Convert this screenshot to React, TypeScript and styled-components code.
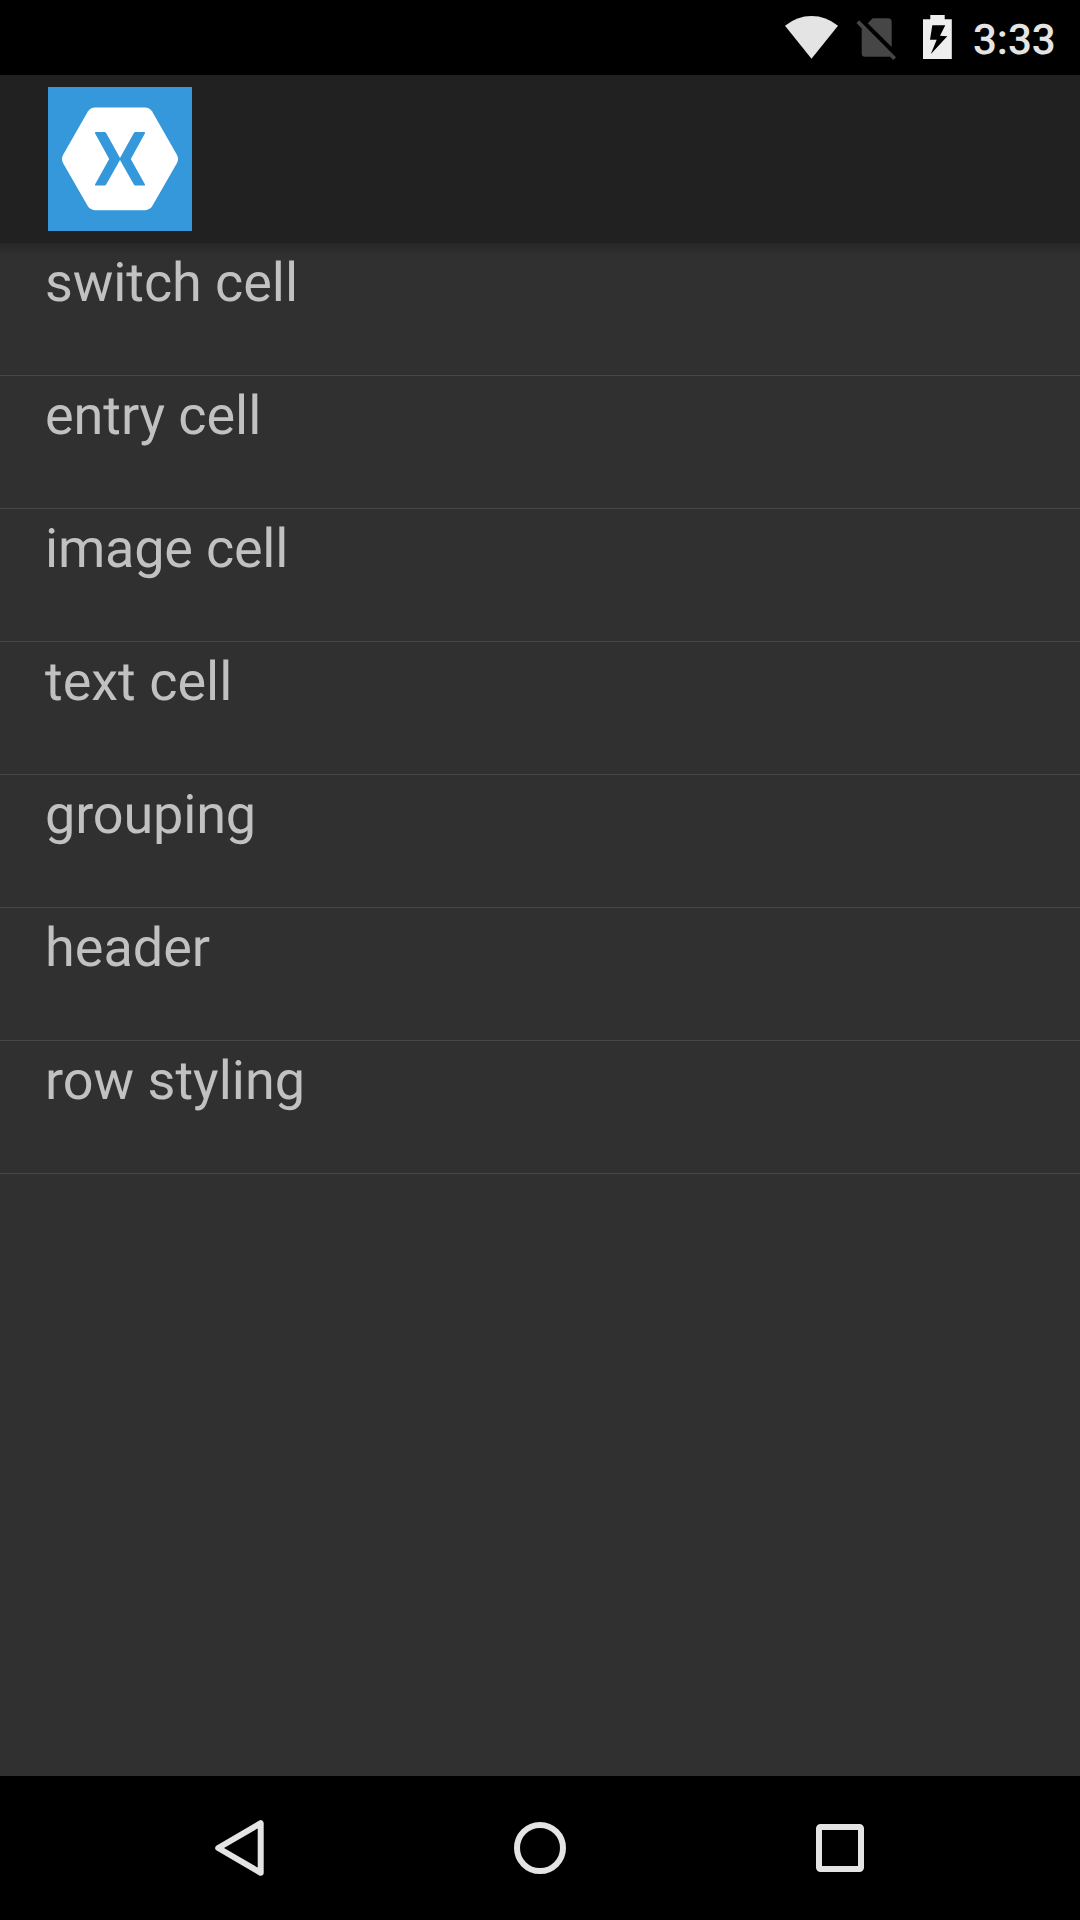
import React from 'react';
import styled, { createGlobalStyle } from 'styled-components';

const GlobalStyle = createGlobalStyle`
  html, body { margin: 0; background: #303030; }
  * { box-sizing: border-box; }
`;

const Screen = styled.div`
  width: 1080px;
  height: 1920px;
  display: flex;
  flex-direction: column;
  overflow: hidden;
  background: #303030;
  font-family: Roboto, sans-serif;
  text-rendering: geometricPrecision;
`;

const StatusBar = styled.header`
  height: 75px;
  flex: none;
  display: flex;
  justify-content: flex-end;
  padding-right: 24px;
  background: #000;
`;

const StatusIcon = styled.svg<{ $width: number; $gap: number }>`
  width: ${(p) => p.$width}px;
  height: 75px;
  margin-right: ${(p) => p.$gap}px;
  flex: none;
`;

const Clock = styled.time`
  width: 83px;
  height: 75px;
  font-size: 42px;
  font-weight: 500;
  line-height: 82px;
  color: #e4e4e4;
`;

const ActionBar = styled.div`
  height: 168px;
  flex: none;
  padding: 12px 48px;
  background: #212121;
`;

const Logo = styled.svg`
  display: block;
  width: 144px;
  height: 144px;
`;

const List = styled.ul`
  flex: 1;
  margin: 0;
  padding: 0;
  list-style: none;
  background: linear-gradient(#272727, #303030 12px);
`;

const Row = styled.li<{ $tracking: number }>`
  height: 133px;
  padding: 9px 45px 0;
  border-bottom: 1px solid #474747;
  font-size: 54px;
  line-height: 64px;
  letter-spacing: ${(p) => p.$tracking}px;
  color: #c1c1c1;
`;

const NavBar = styled.nav`
  height: 144px;
  flex: none;
  display: flex;
  align-items: center;
  justify-content: center;
  gap: 204px;
  background: #000;
`;

const NavButton = styled.button`
  width: 96px;
  height: 144px;
  padding: 0;
  border: 0;
  background: none;
`;

const NavIcon = styled.svg`
  display: block;
  width: 96px;
  height: 144px;
  fill: none;
  stroke: #e4e4e4;
  stroke-width: 6;
  stroke-linejoin: round;
`;

const items = [
  { label: 'switch cell', tracking: -0.08 },
  { label: 'entry cell', tracking: -0.08 },
  { label: 'image cell', tracking: -0.22 },
  { label: 'text cell', tracking: 0 },
  { label: 'grouping', tracking: -0.16 },
  { label: 'header', tracking: 0 },
  { label: 'row styling', tracking: 0 },
];

export default function App() {
  return (
    <Screen>
      <GlobalStyle />
      <StatusBar>
        <StatusIcon $width={54} $gap={17} viewBox="785 0 54 75">
          <path d="M811.5 58.7 L785 25.7 Q797 16 811.5 16 Q826 16 838 25.7 Z" fill="#e4e4e4" />
        </StatusIcon>
        <StatusIcon $width={42} $gap={25} viewBox="856 0 42 75">
          <g fill="#464646">
            <path d="M867.7 23.3 L872.7 18.3 H888 Q891.7 18.3 891.7 22 V47 Z" />
            <path d="M859.2 20.2 L896 57.2 L893.3 60 L889.7 56.4 Q889 56.8 888 56.8 H865 Q861.7 56.8 861.7 53.5 V28.4 L856.4 23 Z" />
          </g>
        </StatusIcon>
        <StatusIcon $width={29} $gap={21} viewBox="923 0 29 75">
          <path
            fillRule="evenodd"
            fill="#eee"
            d="M930.3 15 H944.7 V19.2 H951.8 V59 H923 V19.2 H930.3 Z M932.3 25.3 H945.3 L940 35.7 L947.3 36.3 L930.7 54.3 L936.7 39.7 H930 Z"
          />
        </StatusIcon>
        <Clock>3:33</Clock>
      </StatusBar>
      <ActionBar>
        <Logo viewBox="0 0 144 144">
          <path fill="#3498db" d="M0 0H144V144H0Z" />
          <path
            fill="#fff"
            d="M47 20.5 H97 Q101.5 20.8 104 24.2 L129 68 Q131 72 129 76 L104 119.5 Q101.5 122.9 97 123.2 H47 Q42.5 122.9 40 119.5 L15 76 Q13 72 15 68 L40 24.2 Q42.5 20.8 47 20.5 Z"
          />
          <path
            fill="#3498db"
            d="M48 45 H56.6 Q57.5 45 58 45.8 L72 71 L86 45.8 Q86.5 45 87.4 45 H96 Q97.6 45 97 46.3 L82.8 72 L97 97.5 Q97.6 98.6 96 98.6 H87.4 Q86.5 98.6 86 97.8 L72 73 L58 97.8 Q57.5 98.6 56.6 98.6 H48 Q46.4 98.6 47 97.5 L61.2 72 L47 46.3 Q46.4 45 48 45 Z"
          />
        </Logo>
      </ActionBar>
      <List>
        {items.map((item) => (
          <Row key={item.label} $tracking={item.tracking}>{item.label}</Row>
        ))}
      </List>
      <NavBar>
        <NavButton aria-label="Back">
          <NavIcon viewBox="192 1776 96 144">
            <path d="M260.7 1823.2 V1872.8 L218.2 1848 Z" />
          </NavIcon>
        </NavButton>
        <NavButton aria-label="Home">
          <NavIcon viewBox="492 1776 96 144">
            <circle cx="540" cy="1848" r="23" />
          </NavIcon>
        </NavButton>
        <NavButton aria-label="Overview">
          <NavIcon viewBox="792 1776 96 144">
            <rect x="819" y="1827" width="42" height="42" rx="1.5" />
          </NavIcon>
        </NavButton>
      </NavBar>
    </Screen>
  );
}
